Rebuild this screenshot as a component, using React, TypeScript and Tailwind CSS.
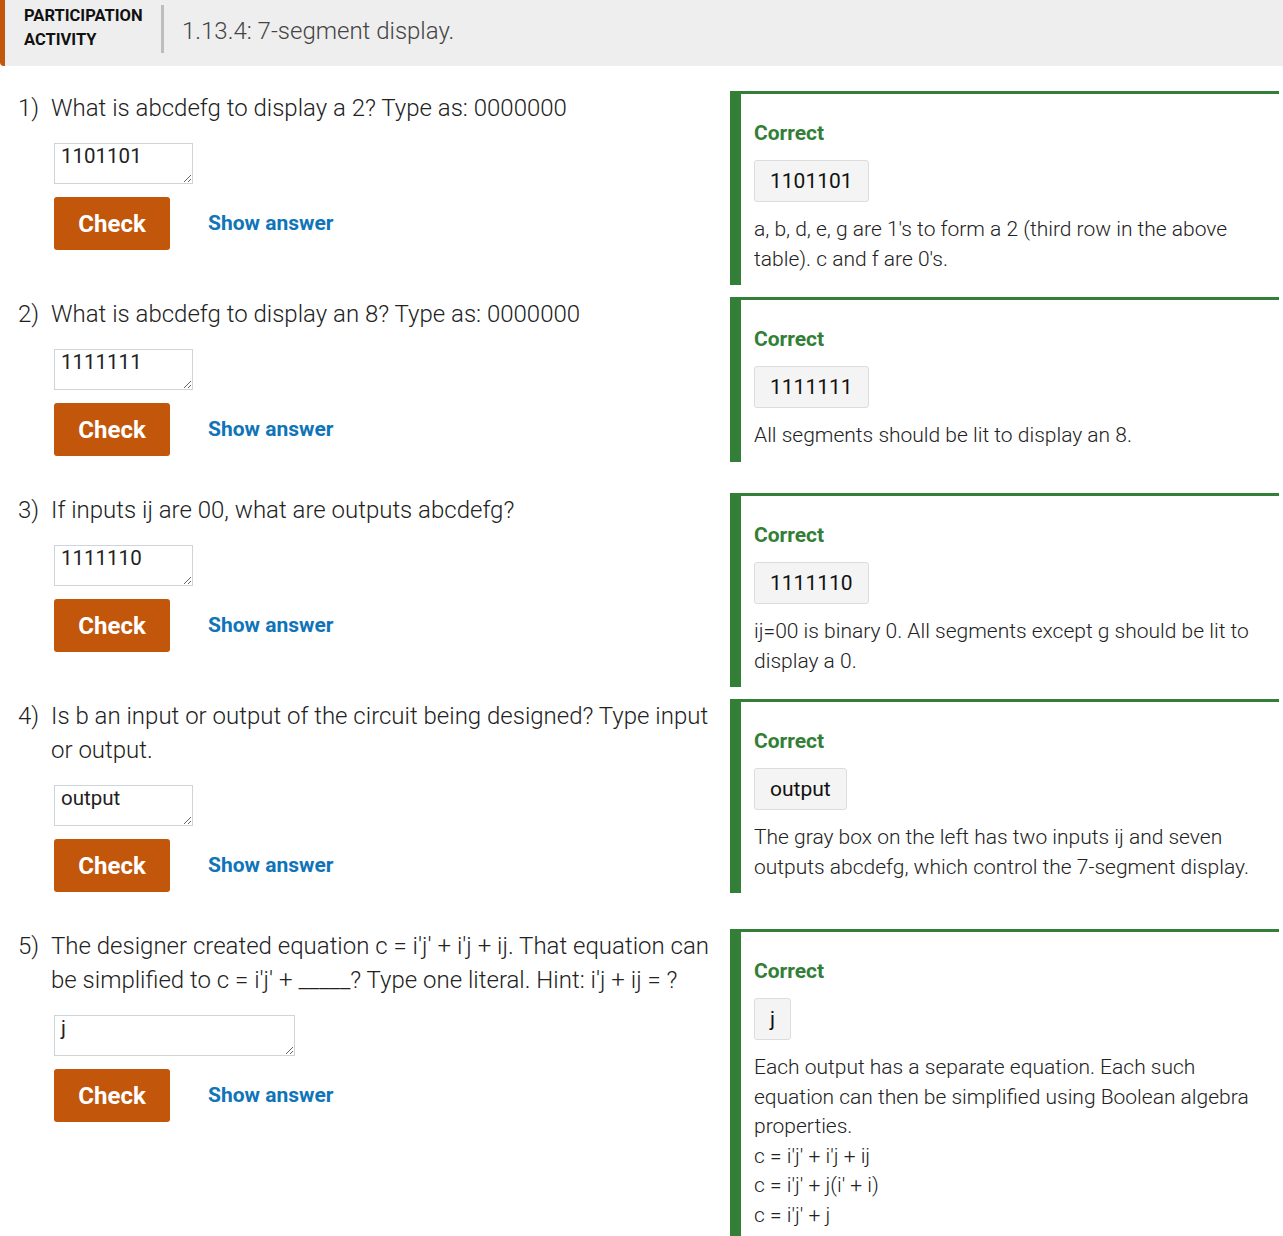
import React from 'react';

interface Question {
  num: number;
  prompt: string;
  value: string;
  wide?: boolean;
  answer: string;
  explanation: string[];
}

const questions: Question[] = [
  {
    num: 1,
    prompt: 'What is abcdefg to display a 2? Type as: 0000000',
    value: '1101101',
    answer: '1101101',
    explanation: ["a, b, d, e, g are 1's to form a 2 (third row in the above table). c and f are 0's."],
  },
  {
    num: 2,
    prompt: 'What is abcdefg to display an 8? Type as: 0000000',
    value: '1111111',
    answer: '1111111',
    explanation: ['All segments should be lit to display an 8.'],
  },
  {
    num: 3,
    prompt: 'If inputs ij are 00, what are outputs abcdefg?',
    value: '1111110',
    answer: '1111110',
    explanation: ['ij=00 is binary 0. All segments except g should be lit to display a 0.'],
  },
  {
    num: 4,
    prompt: 'Is b an input or output of the circuit being designed? Type input or output.',
    value: 'output',
    answer: 'output',
    explanation: [
      'The gray box on the left has two inputs ij and seven outputs abcdefg, which control the 7-segment display.',
    ],
  },
  {
    num: 5,
    prompt: "The designer created equation c = i'j' + i'j + ij. That equation can be simplified to c = i'j' + _____? Type one literal. Hint: i'j + ij = ?",
    value: 'j',
    wide: true,
    answer: 'j',
    explanation: [
      'Each output has a separate equation. Each such equation can then be simplified using Boolean algebra properties.',
      "c = i'j' + i'j + ij",
      "c = i'j' + j(i' + i)",
      "c = i'j' + j",
    ],
  },
];

const QuestionRow: React.FC<{ q: Question }> = ({ q }) => (
  <div className="flex items-start">
    {/* Left: prompt + input */}
    <div className="w-[730px] shrink-0 pl-[18px] pr-[14px] pb-[37px]">
      <div className="flex text-[24px] leading-[34px] font-light text-[#222]">
        <span className="w-[33px] shrink-0">{q.num})</span>
        <p>{q.prompt}</p>
      </div>
      <div className="pl-[36px]">
        <textarea
          readOnly
          defaultValue={q.value}
          className={`mt-[18px] block h-[41px] ${
            q.wide ? 'w-[241px]' : 'w-[139px]'
          } border border-[#cdd4da] px-[6px] pt-[1px] text-[20.5px] leading-[22px] font-normal text-[#222] outline-none`}
        />
        <div className="mt-[13px] flex items-center">
          <button className="h-[53px] w-[116px] rounded-[3px] bg-[#c2570c] text-[24px] font-bold text-white">
            Check
          </button>
          <button className="ml-[38px] text-[21px] font-bold text-[#0f74b8]">Show answer</button>
        </div>
      </div>
    </div>

    {/* Right: feedback card */}
    <div className="mb-[12px] w-[549px] shrink-0 border-t-[3px] border-l-[11px] border-[#347f37] pl-[13px] pr-[22px] pt-[24px] pb-[11px]">
      <div className="text-[21px] leading-[30px] font-bold text-[#347f37]">Correct</div>
      <div className="mt-[12px] inline-block rounded-[3px] border border-[#dcdcdc] bg-[#f4f4f4] px-[15px] py-[5px] text-[21px] leading-[30px] text-[#111]">
        {q.answer}
      </div>
      <div className="mt-[13px] text-[21px] leading-[29.5px] font-light text-[#222]">
        {q.explanation.map((line, i) => (
          <p key={i}>{line}</p>
        ))}
      </div>
    </div>
  </div>
);

export default function App() {
  return (
    <div className="min-h-screen bg-white font-['Roboto',_'Liberation_Sans',_sans-serif]">
      {/* Header */}
      <div className="flex h-[66px] items-start rounded-bl-[4px] border-l-[5px] border-[#c2570c] bg-[#eeeeee]">
        <div className="w-[156px] shrink-0 pl-[19px] pt-[4px] text-[16.5px] leading-[24px] font-bold text-[#111]">
          PARTICIPATION
          <br />
          ACTIVITY
        </div>
        <div className="mt-[5px] h-[48px] w-[3px] bg-[#bdbdbd]" />
        <div className="pl-[18px] pt-[15px] text-[24px] leading-[32px] font-light text-[#444]">
          1.13.4: 7-segment display.
        </div>
      </div>

      {/* Questions */}
      <div className="pt-[25px]">
        {questions.map((q) => (
          <QuestionRow key={q.num} q={q} />
        ))}
      </div>
    </div>
  );
}
